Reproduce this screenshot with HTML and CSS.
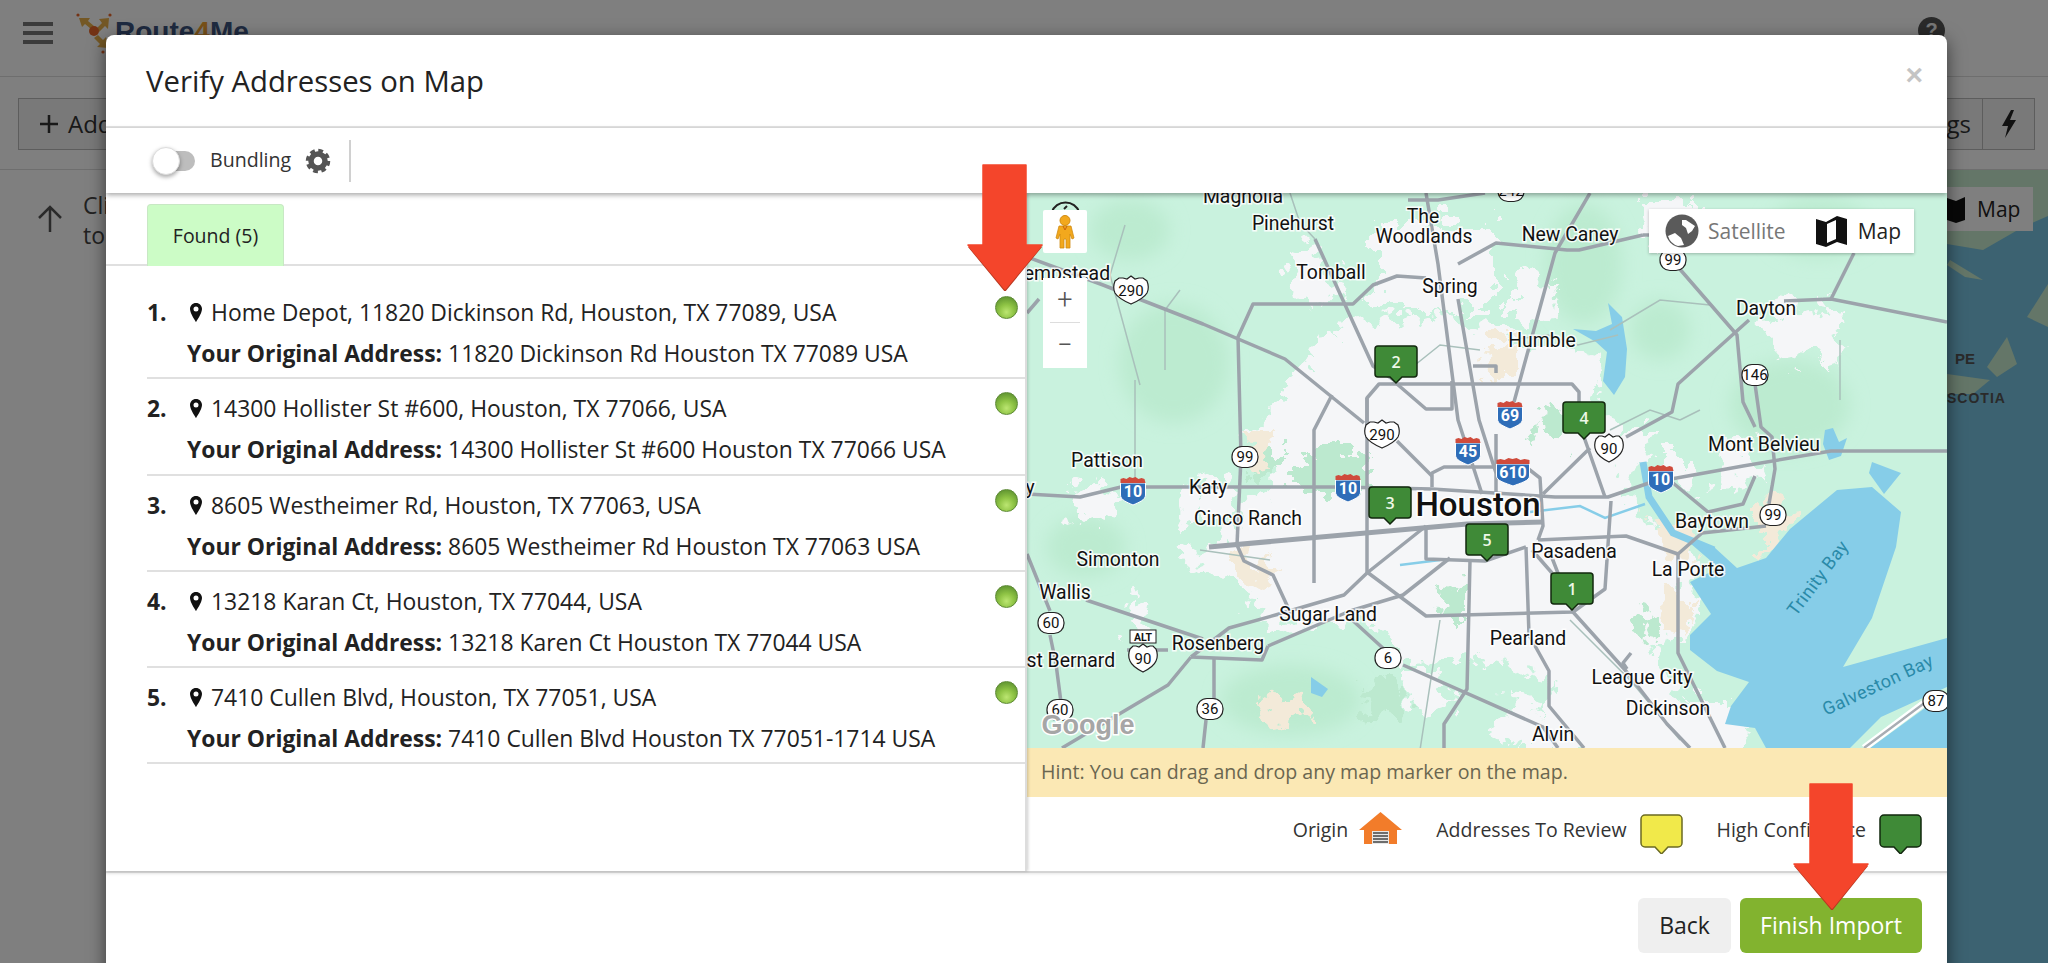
FILE: index.html
```html
<!DOCTYPE html>
<html lang="en">
<head>
<meta charset="utf-8">
<title>Verify Addresses on Map</title>
<link rel="stylesheet" href="styles.css">
</head>
<body>
<div class="app">
  <header class="topbar">
    <div class="burger"><span></span><span></span><span></span></div>
    <svg class="logo-mark" width="40" height="46" viewBox="0 0 40 46">
      <circle class="logo-red" cx="2" cy="5" r="1.600"/><circle class="logo-red" cx="34" cy="5" r="1.600"/><circle class="logo-red" cx="27" cy="42" r="1.600"/>
      <path class="logo-gold" d="M3 8l11 0-2 3 6 5-3 3-6-5-3 3zM33 8l-1 11-3-3-6 6-3-3 6-6-3-4zM18 28l4-3 5 5 3-3 2 11-11-1 3-3z"/>
      <circle class="logo-red" cx="18" cy="21" r="5"/>
    </svg>
    <span class="logo-text">Route<b>4</b>Me</span>
    <span class="help">?</span>
  </header>
  <div class="actions">
    <div class="add-btn"><svg class="add-plus" width="20" height="20" viewBox="0 0 20 20"><path d="M10 1v18M1 10h18" stroke="#333" stroke-width="2.500"/></svg>Add</div>
    <div class="right-btns"><span class="rb-label">Settings</span><span class="rb-bolt"><svg width="16" height="28" viewBox="0 0 16 28"><path d="M10 0L1 16h6L4 28l11-18H9l4-10z" fill="#222"/></svg></span></div>
  </div>
  <div class="content">
    <div class="hint-left">
      <svg class="up" width="26" height="28" viewBox="0 0 26 28"><path d="M13 27V2M2 13L13 2l11 11" fill="none" stroke="#555" stroke-width="2.500"/></svg>
      <p class="cli">Click<br>to</p>
    </div>
    <div class="bg-map">
      <svg class="bg-geo" width="101" height="240" viewBox="0 0 101 240">
        <path class="bg-land" d="M0 0h101v46l-25 11-40 23L0 74z"/>
        <path class="bg-land" d="M3 90l33 20-18-3-18-12z"/>
        <path class="bg-land" d="M80 147l21-33v43z"/>
        <path class="bg-land" d="M40 197l20-30 10 27-20 13z"/>
        <path class="bg-land" d="M0 204l43 6-17 14H0z"/>
      </svg>
      <span class="bg-map-btn"><svg width="18" height="28" viewBox="0 0 18 28"><path d="M0 3l9 3 9-4v23l-9 3-9-3z" fill="#111"/></svg>Map</span>
      <span class="bg-pe">PE</span>
      <span class="bg-scotia">SCOTIA</span>
    </div>
  </div>
</div>

<div class="backdrop"></div>

<section class="modal">
  <div class="modal-head">
    <h1>Verify Addresses on Map</h1>
    <span class="close">&times;</span>
  </div>
  <div class="modal-tools">
    <span class="toggle"><i></i></span>
    <span class="tool-label">Bundling</span>
    <svg class="gear" width="26" height="26" viewBox="-13 -13 26 26">
      <circle r="10" fill="none" stroke="#555" stroke-width="4.500" stroke-dasharray="4.500 3.350"/>
      <circle r="7" fill="none" stroke="#555" stroke-width="5.500"/>
    </svg>
    <span class="tool-sep"></span>
  </div>
  <div class="modal-body">
    <div class="left-pane">
      <div class="tabs"><span class="tab">Found (5)</span></div>
      <ol class="rows">
        <li class="row">
          <b class="num">1.</b>
          <div class="addr">
            <div class="line1"><svg class="pin" width="12" height="19" viewBox="0 0 12 19"><path fill-rule="evenodd" d="M6 0C2.500 0 0 2.700 0 6c0 4.500 6 13 6 13s6-8.500 6-13c0-3.300-2.500-6-6-6zm0 3.500a2.500 2.500 0 110 5 2.500 2.500 0 010-5z"/></svg>Home Depot, 11820 Dickinson Rd, Houston, TX 77089, USA</div>
            <div class="line2"><b>Your Original Address:</b> 11820 Dickinson Rd Houston TX 77089 USA</div>
          </div>
          <span class="dot"></span>
        </li>
        <li class="row">
          <b class="num">2.</b>
          <div class="addr">
            <div class="line1"><svg class="pin" width="12" height="19" viewBox="0 0 12 19"><path fill-rule="evenodd" d="M6 0C2.500 0 0 2.700 0 6c0 4.500 6 13 6 13s6-8.500 6-13c0-3.300-2.500-6-6-6zm0 3.500a2.500 2.500 0 110 5 2.500 2.500 0 010-5z"/></svg>14300 Hollister St #600, Houston, TX 77066, USA</div>
            <div class="line2"><b>Your Original Address:</b> 14300 Hollister St #600 Houston TX 77066 USA</div>
          </div>
          <span class="dot"></span>
        </li>
        <li class="row">
          <b class="num">3.</b>
          <div class="addr">
            <div class="line1"><svg class="pin" width="12" height="19" viewBox="0 0 12 19"><path fill-rule="evenodd" d="M6 0C2.500 0 0 2.700 0 6c0 4.500 6 13 6 13s6-8.500 6-13c0-3.300-2.500-6-6-6zm0 3.500a2.500 2.500 0 110 5 2.500 2.500 0 010-5z"/></svg>8605 Westheimer Rd, Houston, TX 77063, USA</div>
            <div class="line2"><b>Your Original Address:</b> 8605 Westheimer Rd Houston TX 77063 USA</div>
          </div>
          <span class="dot"></span>
        </li>
        <li class="row">
          <b class="num">4.</b>
          <div class="addr">
            <div class="line1"><svg class="pin" width="12" height="19" viewBox="0 0 12 19"><path fill-rule="evenodd" d="M6 0C2.500 0 0 2.700 0 6c0 4.500 6 13 6 13s6-8.500 6-13c0-3.300-2.500-6-6-6zm0 3.500a2.500 2.500 0 110 5 2.500 2.500 0 010-5z"/></svg>13218 Karan Ct, Houston, TX 77044, USA</div>
            <div class="line2"><b>Your Original Address:</b> 13218 Karen Ct Houston TX 77044 USA</div>
          </div>
          <span class="dot"></span>
        </li>
        <li class="row">
          <b class="num">5.</b>
          <div class="addr">
            <div class="line1"><svg class="pin" width="12" height="19" viewBox="0 0 12 19"><path fill-rule="evenodd" d="M6 0C2.500 0 0 2.700 0 6c0 4.500 6 13 6 13s6-8.500 6-13c0-3.300-2.500-6-6-6zm0 3.500a2.500 2.500 0 110 5 2.500 2.500 0 010-5z"/></svg>7410 Cullen Blvd, Houston, TX 77051, USA</div>
            <div class="line2"><b>Your Original Address:</b> 7410 Cullen Blvd Houston TX 77051-1714 USA</div>
          </div>
          <span class="dot"></span>
        </li>
      </ol>
    </div>
    <div class="right-pane">
      <div class="map">
        <svg class="map-svg" width="920" height="555" viewBox="1027 193 920 555">
          <defs>
            <filter id="soft" x="-30%" y="-30%" width="160%" height="160%"><feGaussianBlur stdDeviation="9"/></filter>
            <filter id="rough" x="-10%" y="-10%" width="120%" height="120%">
              <feTurbulence type="turbulence" baseFrequency=".035" numOctaves="3" seed="4" result="n"/>
              <feDisplacementMap in="SourceGraphic" in2="n" scale="42" xChannelSelector="R" yChannelSelector="G"/>
            </filter>
            <g id="mk"><path d="M-18 -31h36a3 3 0 013 3v25a3 3 0 01-3 3H6l-6 6-6-6h-12a3 3 0 01-3-3v-25a3 3 0 013-3z" class="mk-shape"/></g>
            <g id="us"><path d="M-13 -10l3-3h3l3 1 4-3 4 3 3-1h3l3 3c2 5 2 8 0 12-2 5-7 8-13 11-6-3-11-6-13-11-2-4-2-7 0-12z" class="sh-us"/></g>
            <g id="usw"><path d="M-16 -10l4-3h4l4 1 4-3 4 3 4-1h4l4 3c2 5 2 8 0 12-3 5-9 8-16 11-7-3-13-6-16-11-2-4-2-7 0-12z" class="sh-us"/></g>
            <g id="st"><rect x="-13" y="-10.500" width="26" height="21" rx="10" class="sh-us"/></g>
            <g id="in">
              <path d="M-12.500 -8V4c0 5 6 7 12.500 10 6.500-3 12.500-5 12.500-10V-8z" class="sh-blue"/>
              <path d="M-12.500 -8v-4l3-1 3 1 3-2 3 1 3-1 3 2 3-1 3 1 1 4z" class="sh-red"/>
            </g>
            <g id="inw">
              <path d="M-16.500 -8V4c0 5 9 7 16.500 10 7.500-3 16.500-5 16.500-10V-8z" class="sh-blue"/>
              <path d="M-16.500 -8v-4l4-1 4 1 4-2 4 1 4-1 4 2 4-1 5 1v4z" class="sh-red"/>
            </g>
          </defs>

          <rect x="1027" y="193" width="920" height="555" class="m-land"/>

          <g class="m-forest" filter="url(#soft)">
            <ellipse cx="1584" cy="264" rx="38" ry="60"/>
            <ellipse cx="1790" cy="405" rx="60" ry="45"/>
            <ellipse cx="1819" cy="228" rx="50" ry="30"/>
            <ellipse cx="1174" cy="363" rx="55" ry="60"/>
            <ellipse cx="1086" cy="547" rx="40" ry="30"/>
            <ellipse cx="1291" cy="700" rx="70" ry="35"/>
            <ellipse cx="1130" cy="230" rx="40" ry="30"/>
            <ellipse cx="1660" cy="330" rx="30" ry="30"/>
          </g>

          <g class="m-urban" filter="url(#rough)">
            <path d="M1309 324L1438 303 1496 328 1590 352 1579 391 1614 420 1649 420 1614 476 1637 512 1690 547 1684 618 1643 635 1672 689 1743 689 1731 748H1514L1543 671 1473 646 1391 653 1356 611 1262 618 1238 582 1168 550 1203 533 1262 476 1238 420 1285 370z"/>
            <path d="M1367 214l118 0 0 86-118 0z"/>
            <path d="M1760 305l60-10 15 55-45 5-25-10z"/>
            <path d="M1632 190l60 0-10 40-40 5z"/>
            <path d="M1710 440l30-10 10 40-30 10z"/>
            <path d="M1060 485l30-10 20 25-40 15z"/>
            <path d="M1590 655l40 40-20 40-30-40z"/>
            <path d="M1290 240l30 5 15 40-35 10-20-30z"/>
            <path d="M1505 270l35 5 5 35-40 5z"/>
            <path d="M1390 660l40 0 15 35-40 15z"/>
            <path d="M1500 680l30 10-5 50-30-10z"/>
            <path d="M1180 480l40-10 10 30-45 15z"/>
            <path d="M1660 450l30 0 10 25-40 10z"/>
            <path d="M1120 590l20 10-10 25-15-15z"/>
          </g>
          <g class="m-forest2" filter="url(#rough)">
            <path d="M1291 441h64v46h-64z"/>
            <path d="M1240 440h30v30h-30z"/>
            <path d="M1430 575l30-5 0 40-25 0z"/>
            <path d="M1535 395l25 10-10 40-20-15z"/>
            <path d="M1350 680l40 -10 10 30-40 20z"/>
            <path d="M1630 600l20 10-10 25-20-10z"/>
          </g>
          <g class="m-sand" filter="url(#rough)">
            <path d="M1640 510l40 5 10 25-30 10z"/>
            <path d="M1750 490l35 -5 -5 55-30 5z"/>
            <path d="M1660 590l20 0 0 25-25 5z"/>
            <path d="M1232 552l35 5-10 22-25-8z"/>
            <path d="M1240 685l50 5 10 20-40 5z"/>
            <path d="M1473 335l35 0 0 32-30 0z"/>
            <path d="M1240 420l22 0-5 40-20-5z"/>
          </g>

          <g class="m-water">
            <path d="M1690 582L1711 614 1690 635 1690 650 1717 671 1749 682 1731 706 1725 724 1755 728 1766 748H1850L1881 717 1947 687V638L1843 667 1872 618 1896 547 1901 512 1872 487 1837 490 1790 529 1766 558 1737 568 1714 547 1690 543 1719 568 1696 579z"/>
            <path d="M1872 462L1901 473 1884 494 1869 473z"/>
            <path d="M1608 303L1622 317 1627 349 1625 377 1614 395 1603 381 1607 352 1596 342 1573 329 1596 331 1612 324z"/>
            <path d="M1311 677l17 12-6 8-11-4z"/>
            <path d="M1870 748l55-40 22-3v43z"/>
            <path d="M1825 430l8-2 6 14 8-4-6 18-12 4-6-16z"/>
          </g>
          <path class="m-chan" d="M1643 462l6 35 24 36 41 17"/>
          <path class="m-creek" d="M1530 512l50-6 25 12 40-14M1400 565l40-5"/>

          <g class="m-thin">
            <path d="M1290 193l10 30 15 16M1125 225l-15 50 30 110M1135 380l0 100M1180 290l-15 20 0 60"/>
            <path d="M1480 350l-40-5-50 40M1508 340l40-5 30 10 40-10M1680 420l-30-10-40 20M1700 410l-20 10"/>
            <path d="M1570 620l60 60 50 60M1440 620l-20 130M1840 400v-60M1270 560l-70-10M1610 330l50-30 50 5"/>
          </g>

          <g class="m-road">
            <path d="M1027 494l53 3 41-10h217l94 2 123 8h53l41-14 94-17 88-15h116"/>
            <path d="M1432 487v-14l12-6h82l14 11 3 48-5 14"/>
            <path d="M1426 526v33l59 2 41-14"/>
            <path d="M1241 457l-3-120 15-33h100l20-19 24-9 29 2"/>
            <path d="M1367 430v-32l12-14h193l7 8v10"/>
            <path d="M1367 398v174l59 44 147-4 32-23 6-88"/>
            <path d="M1584 437l21 60M1543 494l47-46"/>
            <path d="M1590 193l-35 60-41 149"/>
            <path d="M1496 434v60"/>
            <path d="M1426 193l12 71 20 156 24 74"/>
            <path d="M1458 299l21 121 17 53"/>
            <path d="M1397 384l29 25h26v-28"/>
            <path d="M1473 366h23v7"/>
            <path d="M1315 239l58 127 24 16"/>
            <path d="M1458 264l38-21 71 7h12l64-15"/>
            <path d="M1027 257l76 28 100 39 82 35 79 64"/>
            <path d="M1397 441l35 35"/>
            <path d="M1314 583V430l18-35"/>
            <path class="m-road-wide" d="M1209 547l258-23 76-2"/>
            <path d="M1538 540l88-4 52 18"/>
            <path d="M1678 554l24-21 64-7"/>
            <path d="M1673 483l35 29 35-8 12-28"/>
            <path d="M1755 384l6 43 11 10 3 32-6 35"/>
            <path d="M1678 267l59 68 6 67 12 25"/>
            <path d="M1626 437l46-25 6-28 71-64"/>
            <path d="M1784 301l47-2 116 23"/>
            <path d="M1854 253l-23 46"/>
            <path d="M1237 545l7 16 29 14 18 39"/>
            <path d="M1241 457l-4 88"/>
            <path d="M1426 526l-59 47-23 22-65 19-50 14-38 29"/>
            <path d="M1086 600l117 39"/>
            <path d="M1268 646l82-35 53-16 47-37"/>
            <path d="M1350 618l35 32M1403 665l140 62 15 21"/>
            <path d="M1470 561l-3 128-23 35v24"/>
            <path d="M1526 547l3 88 20 36v35l35 42"/>
            <path d="M1549 550l24 62 53 59 41 53 23 24"/>
            <path d="M1532 550l20 23"/>
            <path d="M1678 554v99l47 95"/>
            <path d="M1214 657v49M1206 720l-3 28"/>
            <path d="M1027 554l23 57M1050 635l6 29 6 46"/>
            <path d="M1191 657l71 3 6-14M1168 650h-41"/>
            <path d="M1062 748l106-63 23-28"/>
            <path d="M1027 313l12-14M1408 200h30l47-7"/>
            <path d="M1649 235h-6"/>
            <path d="M1631 653l-8 10 4 6"/>
          </g>
          <path class="m-cause" d="M1864 748l59-44 24-8"/>
          <path class="m-cause-r" d="M1864 748l59-44 24-8"/>

          <g class="lbl">
            <text x="1243" y="203">Magnolia</text>
            <text x="1293" y="230">Pinehurst</text>
            <text x="1423" y="223">The</text>
            <text x="1424" y="243">Woodlands</text>
            <text x="1570" y="241">New Caney</text>
            <text x="1331" y="279">Tomball</text>
            <text x="1450" y="293">Spring</text>
            <text x="1766" y="315">Dayton</text>
            <text x="1542" y="347">Humble</text>
            <text x="1060" y="280">Hempstead</text>
            <text x="1107" y="467">Pattison</text>
            <text x="1208" y="494">Katy</text>
            <text x="1248" y="525">Cinco Ranch</text>
            <text x="1118" y="566">Simonton</text>
            <text x="1065" y="599">Wallis</text>
            <text x="1328" y="621">Sugar Land</text>
            <text x="1218" y="650">Rosenberg</text>
            <text x="1060" y="667">East Bernard</text>
            <text x="1528" y="645">Pearland</text>
            <text x="1574" y="558">Pasadena</text>
            <text x="1688" y="576">La Porte</text>
            <text x="1712" y="528">Baytown</text>
            <text x="1764" y="451">Mont Belvieu</text>
            <text x="1642" y="684">League City</text>
            <text x="1668" y="715">Dickinson</text>
            <text x="1553" y="741">Alvin</text>
            <text x="1030" y="494">y</text>
          </g>
          <text x="1478" y="516" class="lbl-big">Houston</text>
          <text x="1818" y="584" class="lbl-bay" transform="rotate(-53 1818 578)">Trinity Bay</text>
          <text x="1878" y="691" class="lbl-bay" transform="rotate(-25 1878 685)">Galveston Bay</text>

          <use href="#st" x="1511" y="191"/><text x="1511" y="196" class="sh-t">242</text>
          <use href="#usw" x="1131" y="291"/><text x="1131" y="296" class="sh-t">290</text>
          <use href="#usw" x="1382" y="435"/><text x="1382" y="440" class="sh-t">290</text>
          <use href="#st" x="1245" y="457"/><text x="1245" y="462" class="sh-t">99</text>
          <use href="#st" x="1673" y="260"/><text x="1673" y="265" class="sh-t">99</text>
          <use href="#st" x="1773" y="515"/><text x="1773" y="520" class="sh-t">99</text>
          <use href="#st" x="1755" y="375"/><text x="1755" y="380" class="sh-t">146</text>
          <use href="#st" x="1051" y="623"/><text x="1051" y="628" class="sh-t">60</text>
          <use href="#st" x="1060" y="710"/><text x="1060" y="715" class="sh-t">60</text>
          <use href="#st" x="1210" y="709"/><text x="1210" y="714" class="sh-t">36</text>
          <use href="#st" x="1388" y="658"/><text x="1388" y="663" class="sh-t">6</text>
          <use href="#st" x="1936" y="701"/><text x="1936" y="706" class="sh-t">87</text>
          <use href="#us" x="1609" y="449"/><text x="1609" y="454" class="sh-t">90</text>
          <use href="#us" x="1143" y="659"/><text x="1143" y="664" class="sh-t">90</text>
          <rect x="1130" y="630" width="26" height="13" class="sh-alt"/><text x="1143" y="641" class="sh-alt-t">ALT</text>
          <use href="#in" x="1133" y="491"/><text x="1133" y="497" class="sh-w">10</text>
          <use href="#in" x="1348" y="488"/><text x="1348" y="494" class="sh-w">10</text>
          <use href="#in" x="1661" y="479"/><text x="1661" y="485" class="sh-w">10</text>
          <use href="#in" x="1468" y="451"/><text x="1468" y="457" class="sh-w">45</text>
          <use href="#in" x="1510" y="415"/><text x="1510" y="421" class="sh-w">69</text>
          <use href="#inw" x="1513" y="472"/><text x="1513" y="478" class="sh-w">610</text>

          <text x="1088" y="734" class="g-logo">Google</text>

          <use href="#mk" x="1396" y="377"/><text x="1396" y="368" class="mk-t">2</text>
          <use href="#mk" x="1584" y="433"/><text x="1584" y="424" class="mk-t">4</text>
          <use href="#mk" x="1390" y="518"/><text x="1390" y="509" class="mk-t">3</text>
          <use href="#mk" x="1487" y="555"/><text x="1487" y="546" class="mk-t">5</text>
          <use href="#mk" x="1572" y="604"/><text x="1572" y="595" class="mk-t">1</text>

          <path class="m-comp" d="M1052 212a14 13 0 0127 0"/>
          <path class="m-comp" d="M1064 209l3-3"/>
        </svg>

        <div class="gm-peg">
          <svg width="20" height="34" viewBox="0 0 20 34">
            <circle cx="10" cy="5.500" r="5" fill="#f2a81d" stroke="#cf8a12"/>
            <path d="M4 11h12l3 12-2 1-2-5v14h-4v-9H9v9H5V19l-2 5-2-1z" fill="#f2a81d" stroke="#cf8a12" stroke-width=".8"/>
            <path d="M8 11l2 4 2-4" fill="none" stroke="#c9610f"/>
          </svg>
        </div>
        <div class="gm-zoom">
          <span class="gm-z">+</span>
          <span class="gm-div"></span>
          <span class="gm-z">&minus;</span>
        </div>
        <div class="gm-type">
          <svg width="34" height="34" viewBox="0 0 34 34">
            <circle cx="17" cy="17" r="16.500" fill="#5a5a5a"/>
            <path d="M21 6l9 6-3 5-4 3-2-6-4-3V6z" fill="#fff"/>
            <path d="M3 22l7-3 6 5 3 7-6 1A15 15 0 013 22z" fill="#fff"/>
          </svg>
          <span class="gm-sat">Satellite</span>
          <svg class="gm-mapi" width="31" height="32" viewBox="0 0 31 32">
            <path d="M0 4l10 3 11-6 10 3v26l-10-3-11 5-10-3z" fill="#111"/>
            <path d="M11 9l9-4v19l-9 4z" fill="#fff"/>
          </svg>
          <span class="gm-map">Map</span>
        </div>
      </div>
      <div class="map-hint">Hint: You can drag and drop any map marker on the map.</div>
      <div class="legend">
        <span>Origin</span>
        <svg class="lg-house" width="43" height="32" viewBox="0 0 43 32">
          <path d="M21.500 0L43 18h-5v14H5V18H0z" fill="#f27c2a"/>
          <path d="M13 19h17v13H13z" fill="#e8e8e8"/>
          <path d="M14 21h15M14 24h15M14 27h15M14 30h15" stroke="#444" stroke-width="1.600"/>
        </svg>
        <span class="lg-a">Addresses To Review</span>
        <svg class="lg-m" width="43" height="40" viewBox="0 0 43 40"><path d="M5 1h33a4 4 0 014 4v24a4 4 0 01-4 4H28l-6.500 7L15 33H5a4 4 0 01-4-4V5a4 4 0 014-4z" fill="#f1e94a" stroke="#6b6a22" stroke-width="1.500"/></svg>
        <span class="lg-h">High Confidence</span>
        <svg class="lg-m" width="43" height="40" viewBox="0 0 43 40"><path d="M5 1h33a4 4 0 014 4v24a4 4 0 01-4 4H28l-6.500 7L15 33H5a4 4 0 01-4-4V5a4 4 0 014-4z" fill="#3f8a37" stroke="#12280e" stroke-width="1.500"/></svg>
      </div>
    </div>
  </div>
  <footer class="modal-foot">
    <button class="btn btn-back">Back</button>
    <button class="btn btn-finish">Finish Import</button>
  </footer>
</section>

<svg class="arrow arrow-a" width="78" height="128" viewBox="-2 -2 78 128">
  <path class="arrow-shade" d="M15 2h43v80h16L37 127 0 82h15z"/>
  <path class="arrow-fill" d="M15 0h43v80h16L37 124 0 80h15z"/>
</svg>
<svg class="arrow arrow-b" width="78" height="128" viewBox="-2 -2 78 128">
  <path class="arrow-shade" d="M16 2h42v80h16L38 127 0 82h16z"/>
  <path class="arrow-fill" d="M16 0h42v80h16L38 124 0 80h16z"/>
</svg>
</body>
</html>
```
FILE: styles.css
```css
* { box-sizing: border-box; }
html, body { margin: 0; height: 963px; overflow: hidden; }
body { font-family: "Open Sans", "Liberation Sans", sans-serif; color: #222; background: #fff; position: relative; }

.app { display: flex; flex-direction: column; height: 963px; background: #fff; }
.topbar { height: 77px; display: flex; align-items: flex-start; border-bottom: 1px solid #ddd; padding: 22px 0 0 23px; position: relative; }
.burger { width: 30px; display: flex; flex-direction: column; gap: 5px; }
.burger span { height: 4px; background: #777; }
.logo-mark { margin: -12px 0 0 23px; }
.logo-gold { fill: #e9b04a; }
.logo-red { fill: #e8672a; }
.logo-text { font: 700 28px "Liberation Sans", sans-serif; color: #3c5480; margin: -6px 0 0 -1px; }
.logo-text b { color: #f0a030; }
.help { margin-left: auto; margin-right: 103px; margin-top: -5px; width: 27px; height: 27px; border-radius: 50%; background: #555; color: #eee; font: 700 20px/27px "Liberation Sans", sans-serif; text-align: center; }

.actions { height: 93px; border-bottom: 1px solid #ddd; display: flex; justify-content: space-between; align-items: flex-start; padding: 21px 13px 0 18px; }
.add-btn { height: 52px; padding: 0 40px 0 20px; font-size: 24px; line-height: 50px; border: 1px solid #bbb; background: #f2f2f2; color: #333; display: flex; align-items: center; gap: 9px; }
.right-btns { display: flex; height: 52px; border: 1px solid #bbb; background: #f2f2f2; }
.rb-label { font-size: 24px; line-height: 50px; padding: 0 11px; border-right: 1px solid #bbb; color: #333; }
.rb-bolt { width: 51px; display: flex; align-items: center; justify-content: center; }

.content { flex: 1; display: flex; }
.hint-left { flex: 1; display: flex; padding: 33px 0 0 37px; gap: 20px; }
.up { margin-top: 2px; }
.cli { margin: -13px 0 0; font-size: 23px; line-height: 30px; color: #444; }
.bg-map { width: 101px; background: #78c4e2; position: relative; }
.bg-geo { position: absolute; left: 0; top: 0; }
.bg-land { fill: #c8ecd0; }
.bg-map-btn { position: relative; display: flex; align-items: center; gap: 12px; height: 44px; width: 86px; font-size: 21px; background: #fff; margin-top: 17px; color: #222; }
.bg-pe { position: absolute; left: 8px; top: 180px; font: 700 15px "Liberation Sans", sans-serif; color: #555; }
.bg-scotia { position: absolute; left: 0; top: 220px; font: 700 14px "Liberation Sans", sans-serif; color: #555; letter-spacing: 1px; }

.backdrop { position: absolute; inset: 0; background: rgba(0, 0, 0, .5); }

.modal { position: absolute; z-index: 1; left: 106px; top: 35px; width: 1841px; height: 960px; background: #fff; border-radius: 8px; box-shadow: 0 5px 18px rgba(0, 0, 0, .55); display: flex; flex-direction: column; overflow: hidden; }
.modal-head { height: 93px; flex: none; border-bottom: 2px solid #e4e4e4; display: flex; align-items: center; justify-content: space-between; padding: 0 24px 0 40px; }
.modal-head h1 { margin: 0; font-size: 29.300px; font-weight: 400; color: #222; }
.close { font: 700 30px "Liberation Sans", sans-serif; color: #c4c4c4; margin-bottom: 12px; }
.modal-tools { height: 65px; flex: none; display: flex; align-items: center; padding-left: 46px; position: relative; z-index: 3; background: #fff; box-shadow: 0 2px 5px rgba(0, 0, 0, .35); }
.toggle { position: relative; width: 43px; height: 28px; }
.toggle::before { content: ""; position: absolute; left: 14px; right: 0; top: 4px; height: 20px; border-radius: 10px; background: #bdbdbd; }
.toggle i { position: absolute; left: 0; top: 0; width: 28px; height: 28px; border-radius: 50%; background: #fff; border: 1px solid #ddd; box-shadow: 0 2px 4px rgba(0, 0, 0, .35); }
.tool-label { font-size: 19.600px; margin: 0 0 2px 15px; color: #333; }
.gear { margin-left: 14px; }
.tool-sep { width: 2px; height: 42px; background: #d0d0d0; margin-left: 18px; }

.modal-body { flex: none; height: 678px; display: flex; }
.left-pane { width: 921px; flex: none; padding-left: 41px; border-right: 2px solid #ddd; position: relative; z-index: 2; box-shadow: 1px 0 3px rgba(0, 0, 0, .2); background: #fff; }
.tabs { height: 73px; padding-top: 11px; border-bottom: 2px solid #e0e0e0; margin-left: -41px; padding-left: 41px; }
.tab { display: flex; align-items: center; justify-content: center; width: 137px; height: 62px; background: #ccfcc6; border: 1px solid #c8e8c4; border-bottom: 0; border-radius: 4px 4px 0 0; font-size: 19.500px; color: #222; }
.rows { list-style: none; margin: 17px 0 0; padding: 0; }
.row { display: flex; height: 96.300px; border-bottom: 2px solid #e0e0e0; padding-top: 9px; }
.num { width: 40px; font-size: 22.900px; line-height: 41px; flex: none; }
.addr { flex: 1; font-size: 22.900px; line-height: 41px; color: #222; white-space: nowrap; }
.line1 { display: flex; align-items: center; }
.pin { margin: 0 9px 0 3px; fill: #111; flex: none; }
.dot { width: 23px; height: 23px; border-radius: 50%; flex: none; margin: 4px 7.500px 0 0; border: 1px solid #5d8a35; background: radial-gradient(circle at 50% 72%, #bce672 0, #8fc445 40%, #4f8429 100%); }

.right-pane { flex: 1; display: flex; flex-direction: column; min-width: 0; }
.map { height: 555px; flex: none; position: relative; overflow: hidden; }
.map-svg { display: block; }
.m-land { fill: #c9f2de; }
.m-forest { fill: #bcebd0; }
.m-forest2 path { fill: #bce9cf; }
.m-urban path { fill: #f5f6f8; }
.m-sand path { fill: #f3ead9; }
.m-water path { fill: #86cde8; }
.m-chan { fill: none; stroke: #86cde8; stroke-width: 7; }
.m-creek { fill: none; stroke: #86cde8; stroke-width: 2.500; }
.m-thin path { fill: none; stroke: #a9c0bb; stroke-width: 1.500; }
.m-road path { fill: none; stroke: #9ca3ab; stroke-width: 3.500; stroke-linejoin: round; }
.m-road .m-road-wide { stroke-width: 5; }
.m-cause { fill: none; stroke: #fff; stroke-width: 7; }
.m-cause-r { fill: none; stroke: #a8adb3; stroke-width: 2.500; }
.m-comp { fill: none; stroke: #222; stroke-width: 2; }
.lbl text { font: 400 19.400px Roboto, sans-serif; fill: #111; text-anchor: middle; stroke: #fff; stroke-width: 3px; stroke-opacity: .85; paint-order: stroke; }
.lbl-big { font: 500 33px Roboto, sans-serif; fill: #111; text-anchor: middle; stroke: #fff; stroke-width: 3px; paint-order: stroke; }
.lbl-bay { font: 400 18px Roboto, sans-serif; fill: #2a8aa8; text-anchor: middle; letter-spacing: .5px; }
.sh-us { fill: #fff; stroke: #222; stroke-width: 1.200; }
.sh-blue { fill: #2e6db8; stroke: #fff; stroke-width: 1; }
.sh-red { fill: #cf4b3c; }
.sh-t { font: 400 15px Roboto, sans-serif; fill: #111; text-anchor: middle; }
.sh-w { font: 700 16px Roboto, sans-serif; fill: #fff; text-anchor: middle; }
.sh-alt { fill: #fff; stroke: #222; stroke-width: 1; }
.sh-alt-t { font: 700 10.500px Roboto, sans-serif; fill: #111; text-anchor: middle; }
.g-logo { font: 700 27px "Liberation Sans", sans-serif; fill: #a6a6a6; text-anchor: middle; stroke: #fff; stroke-width: 3px; paint-order: stroke; }
.mk-shape { fill: #3f8a37; stroke: #12280e; stroke-width: 1.500; }
.mk-t { font: 600 16px "Open Sans", sans-serif; fill: #eef8e8; text-anchor: middle; }

.gm-peg { position: absolute; left: 16px; top: 17px; width: 44px; height: 43px; background: #fff; display: flex; align-items: center; justify-content: center; border-radius: 2px; }
.gm-zoom { position: absolute; left: 16px; top: 85px; width: 44px; height: 90px; background: #fff; display: flex; flex-direction: column; align-items: center; }
.gm-z { height: 44px; font: 300 27px/44px Roboto, sans-serif; color: #555; }
.gm-div { width: 30px; height: 1px; background: #ddd; flex: none; }
.gm-type { position: absolute; left: 622px; top: 16px; width: 265px; height: 44px; background: #fff; display: flex; align-items: center; padding-left: 16px; box-shadow: 0 1px 3px rgba(0, 0, 0, .25); font-size: 21px; }
.gm-sat { margin-left: 9px; color: #777; }
.gm-mapi { margin-left: 30px; }
.gm-map { margin-left: 11px; color: #222; }

.map-hint { height: 49px; flex: none; background: #fbe8b4; color: #6a6650; font-size: 19.600px; line-height: 48px; padding-left: 14px; }
.legend { flex: 1; display: flex; align-items: center; justify-content: flex-end; padding: 0 25px 9px 0; font-size: 19.500px; color: #333; }
.lg-house { margin: 0 0 3px 11px; }
.lg-a { margin-left: 34px; }
.lg-h { margin-left: 34px; }
.lg-m { margin: 8px 0 0 13px; }

.modal-foot { flex: 1; display: flex; justify-content: flex-end; align-items: flex-start; gap: 9px; padding: 25px 25px 0 0; border-top: 2px solid #d4d4d4; box-shadow: inset 0 3px 3px -2px rgba(0, 0, 0, .1); }
.btn { height: 55px; border: 0; border-radius: 6px; font-family: "Open Sans", sans-serif; font-size: 23px; padding: 0 0 2px; }
.btn-back { width: 93px; background: #efefef; color: #222; }
.btn-finish { width: 182px; background: #82b32f; color: #fff; }

.arrow { position: absolute; z-index: 2; }
.arrow-a { left: 966px; top: 163px; }
.arrow-b { left: 1792px; top: 782px; }
.arrow-fill { fill: #f4452b; stroke: #f4452b; stroke-width: 1.500; stroke-linejoin: round; }
.arrow-shade { fill: #b93a22; }
```
